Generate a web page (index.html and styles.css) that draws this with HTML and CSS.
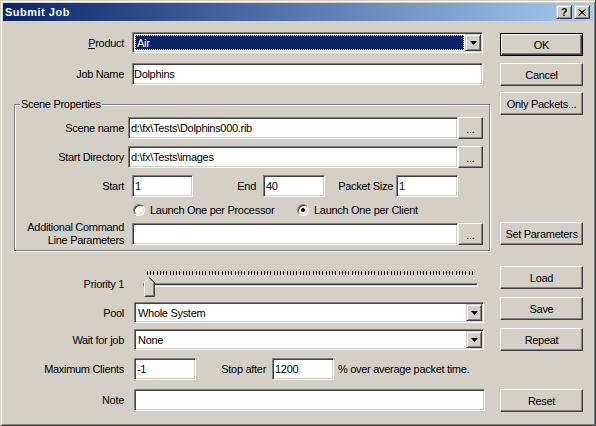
FILE: index.html
```html
<!DOCTYPE html>
<html>
<head>
<meta charset="utf-8">
<title>Submit Job</title>
<link rel="stylesheet" href="styles.css">
</head>
<body>
<div class="window">
  <div class="titlebar">
    <span class="title">Submit Job</span>
    <div class="tbtns">
      <span class="tbtn help">?</span>
      <span class="tbtn close"><svg width="8" height="7" viewBox="0 0 8 7"><path d="M0.5 0.5 L7 6.5 M1.5 0.5 L7.5 6.5 M7 0.5 L0.5 6.5 M7.5 0.5 L1 6.5" stroke="#000" stroke-width="1" fill="none"/></svg></span>
    </div>
  </div>
  <div class="content">
    <div class="main">
      <div class="row r-product">
        <span class="lbl"><u>P</u>roduct</span>
        <div class="combo c-top">
          <div class="combo-val focus"><span>Air</span></div>
          <span class="drop"><svg width="7" height="4" viewBox="0 0 7 4"><polygon points="0,0 7,0 3.5,4" fill="#000"/></svg></span>
        </div>
      </div>
      <div class="row r-job">
        <span class="lbl">Job Name</span>
        <div class="field f-top">Dolphins</div>
      </div>

      <div class="group">
        <div class="group-title">Scene Properties</div>
        <div class="row g-scene">
          <span class="glbl">Scene name</span>
          <div class="field f-path">d:\fx\Tests\Dolphins000.rib</div>
          <span class="btn dots">...</span>
        </div>
        <div class="row g-dir">
          <span class="glbl">Start Directory</span>
          <div class="field f-path">d:\fx\Tests\images</div>
          <span class="btn dots">...</span>
        </div>
        <div class="row g-start">
          <span class="glbl">Start</span>
          <div class="field f-start">1</div>
          <span class="lbl-end">End</span>
          <div class="field f-end">40</div>
          <span class="lbl-packet">Packet Size</span>
          <div class="field f-packet">1</div>
        </div>
        <div class="row g-radio">
          <span class="opt opt1"><span class="radio"></span><span class="opt-text">Launch One per Processor</span></span>
          <span class="opt"><span class="radio checked"></span><span class="opt-text">Launch One per Client</span></span>
        </div>
        <div class="row g-add">
          <span class="glbl two">Additional Command<br>Line Parameters</span>
          <div class="field f-add"></div>
          <span class="btn dots">...</span>
        </div>
      </div>

      <div class="row r-priority">
        <span class="lbl">Priority 1</span>
        <div class="slider">
          <div class="ticks"></div>
          <div class="track"></div>
          <svg class="thumb" width="11" height="20" viewBox="0 0 11 20">
            <polygon points="0,5.5 5.5,0 11,5.5 11,20 0,20" fill="#D4D0C8"/>
            <polyline points="0.5,19.5 0.5,5.5 5.5,0.5" stroke="#fff" fill="none"/>
            <polyline points="5.5,0.5 10.5,5.5 10.5,19.5 0.5,19.5" stroke="#404040" fill="none"/>
            <polyline points="5.5,1.5 9.5,5.5 9.5,18.5 1.5,18.5" stroke="#808080" fill="none"/>
          </svg>
        </div>
      </div>
      <div class="row r-pool">
        <span class="lbl">Pool</span>
        <div class="combo c-low">
          <div class="combo-val"><span>Whole System</span></div>
          <span class="drop"><svg width="7" height="4" viewBox="0 0 7 4"><polygon points="0,0 7,0 3.5,4" fill="#000"/></svg></span>
        </div>
      </div>
      <div class="row r-wait">
        <span class="lbl">Wait for job</span>
        <div class="combo c-low">
          <div class="combo-val"><span>None</span></div>
          <span class="drop"><svg width="7" height="4" viewBox="0 0 7 4"><polygon points="0,0 7,0 3.5,4" fill="#000"/></svg></span>
        </div>
      </div>
      <div class="row r-max">
        <span class="lbl">Maximum Clients</span>
        <div class="field f-max">-1</div>
        <span class="lbl-stop">Stop after</span>
        <div class="field f-stop">1200</div>
        <span class="pct">% over average packet time.</span>
      </div>
      <div class="row r-note">
        <span class="lbl">Note</span>
        <div class="field f-note"></div>
      </div>
    </div>

    <div class="side">
      <span class="btn default b-ok">OK</span>
      <span class="btn b-cancel">Cancel</span>
      <span class="btn b-only">Only Packets...</span>
      <span class="btn b-set">Set Parameters</span>
      <span class="btn b-load">Load</span>
      <span class="btn b-save">Save</span>
      <span class="btn b-repeat">Repeat</span>
      <span class="btn b-reset">Reset</span>
    </div>
  </div>
</div>
</body>
</html>
```
FILE: styles.css
```css
* { box-sizing: border-box; }
html, body { margin: 0; padding: 0; }
body {
  background: #D4D0C8;
  font-family: "Liberation Sans", Arial, sans-serif;
  font-size: 11px;
  letter-spacing: -0.3px;
  color: #000;
}

.window {
  width: 596px;
  height: 426px;
  background: #D4D0C8;
  border: 1px solid;
  border-color: #D4D0C8 #404040 #404040 #D4D0C8;
  box-shadow: inset 1px 1px 0 #fff, inset -1px -1px 0 #808080;
  padding: 2px;
}

.titlebar {
  height: 18px;
  display: flex;
  align-items: center;
  padding: 0 3px 0 2px;
  background: linear-gradient(90deg, #0A246A 0%, #A6CAF0 100%);
}
.title {
  color: #fff;
  font-weight: bold;
  font-size: 11px;
  letter-spacing: 0.5px;
}
.tbtns {
  margin-left: auto;
  display: flex;
  gap: 2px;
}
.tbtn {
  width: 16px;
  height: 14px;
  display: flex;
  align-items: center;
  justify-content: center;
  background: #D4D0C8;
  border: 1px solid;
  border-color: #D4D0C8 #404040 #404040 #D4D0C8;
  box-shadow: inset 1px 1px 0 #fff, inset -1px -1px 0 #808080;
}
.help {
  font-weight: bold;
  font-size: 11px;
  line-height: 1;
  padding-top: 1px;
  letter-spacing: 0;
}

.content { display: flex; }
.main { width: 497px; flex: none; }
.side {
  width: 83px;
  flex: none;
  display: flex;
  flex-direction: column;
}

.row { display: flex; align-items: center; }
.lbl { width: 121px; flex: none; text-align: right; white-space: nowrap; }
.glbl { width: 109px; flex: none; text-align: right; white-space: nowrap; }
.glbl.two { line-height: 13px; }

.field {
  height: 22px;
  flex: none;
  display: flex;
  align-items: center;
  padding: 0 2px;
  background: #fff;
  border: 1px solid;
  border-color: #808080 #fff #fff #808080;
  box-shadow: inset 1px 1px 0 #404040, inset -1px -1px 0 #D4D0C8;
  white-space: nowrap;
  overflow: hidden;
}

.combo {
  height: 21px;
  flex: none;
  display: flex;
  padding: 1px;
  background: #fff;
  border: 1px solid;
  border-color: #808080 #fff #fff #808080;
  box-shadow: inset 1px 1px 0 #404040, inset -1px -1px 0 #D4D0C8;
}
.combo-val {
  flex: 1;
  display: flex;
  align-items: center;
  padding-left: 2px;
  white-space: nowrap;
}
.combo-val.focus {
  margin: 1px;
  padding-left: 1px;
  background: #0A246A;
  color: #fff;
  border: 1px dotted #F2F2BC;
}
.drop {
  width: 16px;
  height: 17px;
  flex: none;
  display: flex;
  align-items: center;
  justify-content: center;
  background: #D4D0C8;
  border: 1px solid;
  border-color: #D4D0C8 #404040 #404040 #D4D0C8;
  box-shadow: inset 1px 1px 0 #fff, inset -1px -1px 0 #808080;
}

.btn {
  display: flex;
  align-items: center;
  justify-content: center;
  height: 23px;
  flex: none;
  background: #D4D0C8;
  border: 1px solid;
  border-color: #fff #404040 #404040 #fff;
  box-shadow: inset -1px -1px 0 #808080;
  white-space: nowrap;
}
.btn.default {
  border-color: #000;
  box-shadow: inset 1px 1px 0 #fff, inset -1px -1px 0 #404040, inset -2px -2px 0 #808080;
}
.btn.dots { width: 25px; height: 22px; padding-top: 2px; }

/* top rows */
.r-product { margin-top: 11px; }
.c-top { margin-left: 8px; width: 351px; }
.r-job { margin-top: 10px; }
.f-top { margin-left: 8px; width: 351px; padding-left: 1px; }

/* group box */
.group {
  margin: 19px 0 0 11px;
  width: 476px;
  border: 1px solid #808080;
  box-shadow: inset 1px 1px 0 #fff, 1px 1px 0 #fff;
  padding-bottom: 3px;
}
.group-title {
  width: max-content;
  margin: -7px 0 0 5px;
  padding: 0 1px;
  line-height: 13px;
  background: #D4D0C8;
}
.g-scene { margin-top: 6px; }
.g-dir { margin-top: 7px; }
.f-path { margin-left: 4px; width: 330px; }
.g-start { margin-top: 7px; }
.f-start { margin-left: 8px; width: 61px; }
.lbl-end { width: 63px; flex: none; text-align: right; }
.f-end { margin-left: 7px; width: 62px; }
.lbl-packet { width: 68px; flex: none; text-align: right; white-space: nowrap; }
.f-packet { margin-left: 3px; width: 62px; }
.g-radio { margin-top: 7px; height: 12px; padding-left: 118px; }
.opt { display: flex; align-items: center; white-space: nowrap; }
.opt1 { width: 164px; flex: none; }
.opt-text { margin-left: 5px; }
.radio {
  width: 12px;
  height: 12px;
  flex: none;
  border-radius: 50%;
  background: #fff;
  border: 1px solid;
  border-color: #808080 #fff #fff #808080;
  box-shadow: inset 1px 1px 0 #404040, inset -1px -1px 0 #D4D0C8;
  display: flex;
  align-items: center;
  justify-content: center;
}
.radio.checked::after {
  content: "";
  width: 4px;
  height: 4px;
  border-radius: 50%;
  background: #000;
}
.g-add { margin-top: 5px; }
.f-add { margin-left: 8px; width: 326px; }

/* priority */
.r-priority { margin-top: 20px; }
.slider {
  position: relative;
  margin-left: 18px;
  width: 336px;
  height: 26px;
  flex: none;
}
.ticks {
  margin-left: 5px;
  width: 326px;
  height: 4px;
  background: repeating-linear-gradient(90deg, #000 0 1px, transparent 1px 3.25px);
}
.track {
  margin: 8px 0 0 1px;
  width: 335px;
  height: 4px;
  border: 1px solid;
  border-color: #808080 #fff #fff #808080;
  box-shadow: inset 1px 1px 0 #404040;
}
.thumb { position: absolute; left: 2px; top: 6px; }

.r-pool { margin-top: 5px; }
.c-low { margin-left: 10px; width: 350px; }
.r-wait { margin-top: 6px; }
.r-max { margin-top: 8px; }
.f-max { margin-left: 10px; width: 62px; }
.lbl-stop { width: 70px; flex: none; text-align: right; white-space: nowrap; }
.f-stop { margin-left: 6px; width: 62px; }
.pct { margin-left: 4px; white-space: nowrap; }
.r-note { margin-top: 9px; }
.f-note { margin-left: 10px; width: 351px; }

/* side buttons */
.b-ok { margin-top: 12px; }
.b-cancel { margin-top: 7px; }
.b-only { margin-top: 6px; }
.b-set { margin-top: 107px; }
.b-load { margin-top: 21px; }
.b-save { margin-top: 8px; }
.b-repeat { margin-top: 8px; }
.b-reset { margin-top: 38px; }
```
